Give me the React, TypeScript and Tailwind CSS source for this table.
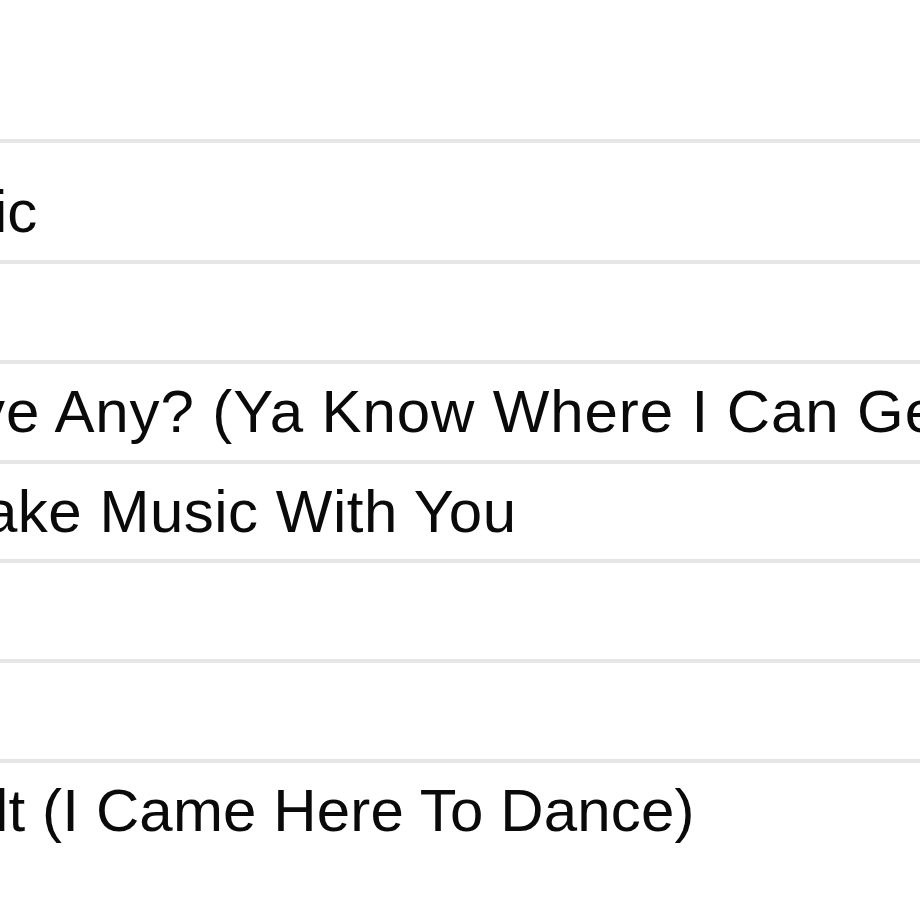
import React from "react";

const rows: { text: string; shift: string; h: string; pad?: string }[] = [
  { text: "ic", shift: "-ml-[6px]", h: "h-[121px]", pad: "pt-[20px]" },
  { text: "", shift: "", h: "h-[100px]" },
  { text: "ve Any? (Ya Know Where I Can Get Some)", shift: "-ml-[25px] tracking-[0.9px]", h: "h-[100px]" },
  { text: "ake Music With You", shift: "-ml-[16px] tracking-[0.5px]", h: "h-[99px]" },
  { text: "", shift: "", h: "h-[100px]" },
  { text: "", shift: "", h: "h-[100px]" },
  { text: "lt (I Came Here To Dance)", shift: "-ml-[5px] tracking-[0.15px]", h: "h-[100px]" },
];

export default function App() {
  return (
    <div
      className="w-[920px] h-[920px] overflow-hidden bg-white text-[#0a0a0a]"
      style={{ fontFamily: '"Liberation Sans", Arial, Helvetica, sans-serif' }}
    >
      <div className="h-[139px]" />
      <ul>
        {rows.map((r, i) => (
          <li
            key={i}
            className={`flex items-center overflow-hidden whitespace-nowrap border-t-4 border-[#e6e6e6] ${r.h} ${r.pad ?? ""}`}
          >
            <span className={`text-[60px] leading-none ${r.shift}`}>{r.text}</span>
          </li>
        ))}
      </ul>
    </div>
  );
}
